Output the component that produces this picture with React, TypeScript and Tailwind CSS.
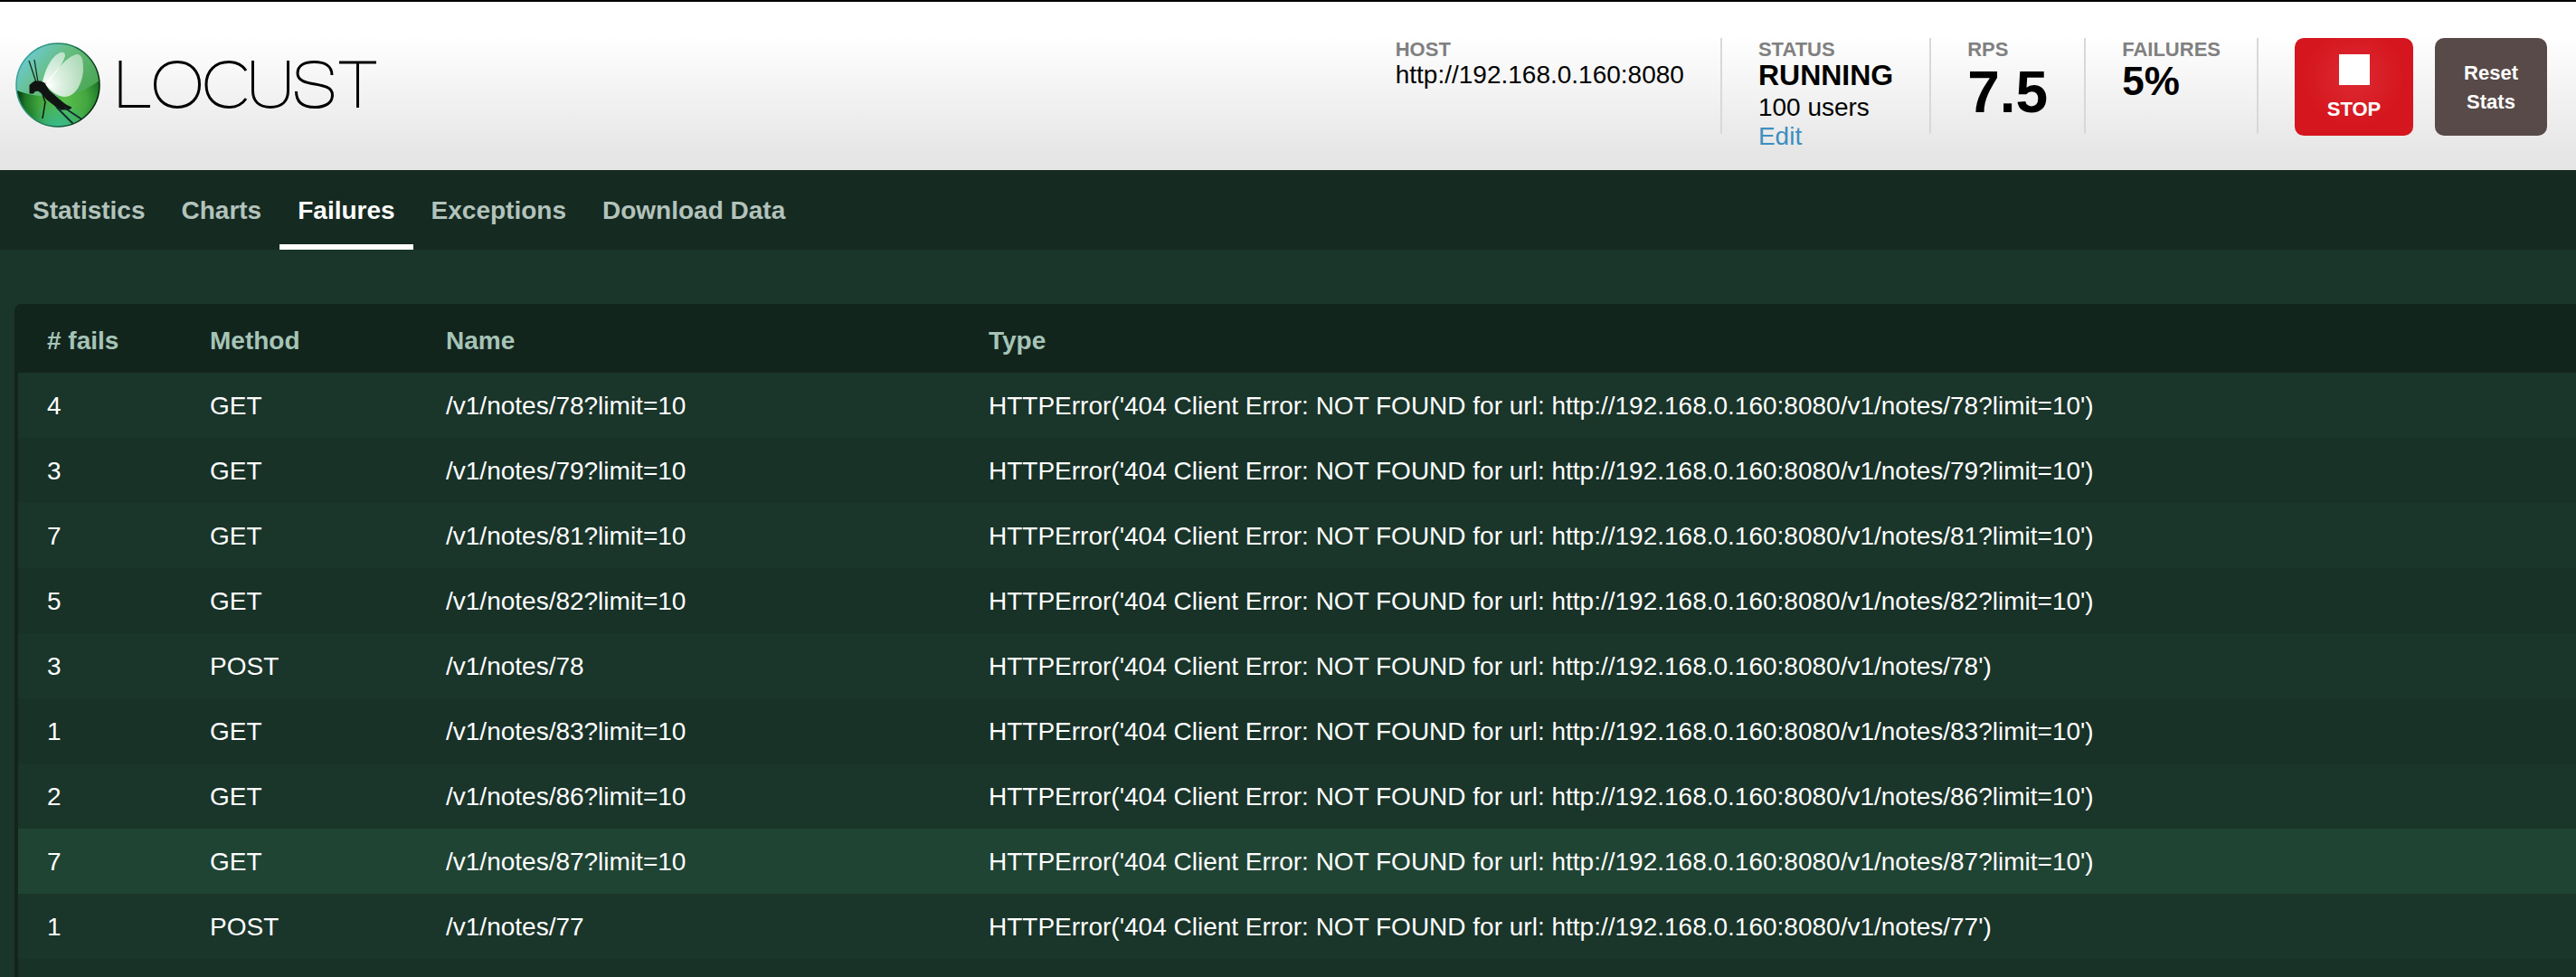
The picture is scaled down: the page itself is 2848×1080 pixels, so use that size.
import type { ReactNode } from "react";

const TABS = ["Statistics", "Charts", "Failures", "Exceptions", "Download Data"];

const HOST = "http://192.168.0.160:8080";

const FAILURES = [
  { count: 4, method: "GET", path: "/v1/notes/78?limit=10" },
  { count: 3, method: "GET", path: "/v1/notes/79?limit=10" },
  { count: 7, method: "GET", path: "/v1/notes/81?limit=10" },
  { count: 5, method: "GET", path: "/v1/notes/82?limit=10" },
  { count: 3, method: "POST", path: "/v1/notes/78" },
  { count: 1, method: "GET", path: "/v1/notes/83?limit=10" },
  { count: 2, method: "GET", path: "/v1/notes/86?limit=10" },
  { count: 7, method: "GET", path: "/v1/notes/87?limit=10", active: true },
  { count: 1, method: "POST", path: "/v1/notes/77" },
];

function Logo() {
  return (
    <svg width="404" height="96" viewBox="16 46 404 96" role="img" aria-label="Locust">
      <defs>
        <radialGradient id="orb" gradientUnits="userSpaceOnUse" cx="70" cy="112" r="52">
          <stop offset="0" stopColor="#5cc04a" />
          <stop offset="0.5" stopColor="#43a740" />
          <stop offset="0.8" stopColor="#1e7a28" />
          <stop offset="1" stopColor="#06350c" />
        </radialGradient>
        <linearGradient id="gloss" gradientUnits="userSpaceOnUse" x1="34" y1="56" x2="96" y2="108">
          <stop offset="0" stopColor="#6cc9cb" />
          <stop offset="0.4" stopColor="#66be80" />
          <stop offset="1" stopColor="#4aa552" />
        </linearGradient>
        <radialGradient id="floor" gradientUnits="userSpaceOnUse" cx="64" cy="146" r="36">
          <stop offset="0" stopColor="#38c0a0" />
          <stop offset="1" stopColor="#38c0a0" stopOpacity="0" />
        </radialGradient>
        <linearGradient id="rim" gradientUnits="userSpaceOnUse" x1="20" y1="70" x2="110" y2="100">
          <stop offset="0" stopColor="#3aa6a4" />
          <stop offset="0.5" stopColor="#1b7d55" />
          <stop offset="1" stopColor="#04240a" />
        </linearGradient>
        <radialGradient id="wing" gradientUnits="userSpaceOnUse" cx="54" cy="94" r="44">
          <stop offset="0" stopColor="#fff" />
          <stop offset="0.3" stopColor="#fff" stopOpacity="0.8" />
          <stop offset="1" stopColor="#fff" stopOpacity="0.5" />
        </radialGradient>
        <clipPath id="orbClip">
          <circle cx="64" cy="94" r="46" />
        </clipPath>
      </defs>
      <g clipPath="url(#orbClip)">
        <circle cx="64" cy="94" r="46" fill="url(#orb)" />
        <circle cx="64" cy="94" r="46" fill="url(#floor)" />
        <path d="M14 42h100v44C98 98 84 106 62 107 42 107 28 104 14 98z" fill="url(#gloss)" />
        <path d="M47 91C50 76 58 61 67 58c5-1 6 3 4 7C67 74 59 84 53 92z" fill="url(#wing)" />
        <path d="M50 93C62 78 74 62 85 60c7 0 7 10 7 18-1 15-9 29-20 29-8 0-16-6-22-14z" fill="url(#wing)" />
        <path d="M32 67 40 91M38 66l4 25" stroke="#16301f" strokeWidth="1.300" fill="none" />
        <path d="M33 103v-9l5-4h7l4 2 5 8 8 7 7 6 4 3 6 3-3 2H67l-6-4-9-7-6-7-4-3-4 1-1 2z" fill="#101513" stroke="#101513" strokeWidth="1" strokeLinejoin="round" />
        <path d="M47 104l3 9-3 18" stroke="#101513" strokeWidth="1.500" fill="none" />
        <path d="M62 118l20 20M71 119l21 14" stroke="#102b32" strokeWidth="1.800" fill="none" />
      </g>
      <circle cx="64" cy="94" r="46" fill="none" stroke="url(#rim)" strokeWidth="1.500" />
      <g fill="none" stroke="#000" strokeWidth="3">
        <path d="M133 67v50.500h33" />
        <path d="M196 68.500c14.500 0 24.500 10 24.500 25s-10 25-24.500 25-24.500-10-24.500-25 10-25 24.500-25z" />
        <path d="M272 78c-4-6-10-9.500-19-9.500-15 0-25 10-25 25s10 25 25 25c9 0 15-3.500 19-9.500" />
        <path d="M279.500 67v33c0 12 7 18.500 19.500 18.500s19.500-6.500 19.500-18.500v-33" />
        <path d="M367 83c0-10-8-14.500-19.500-14.500-11 0-18.500 4-18.500 12.500 0 17 38.500 7 38.500 24 0 9-8 13.500-19.500 13.500-13 0-20.500-5.500-20.500-17.500" />
        <path d="M375 69h41M395.500 69v50" />
      </g>
    </svg>
  );
}

function Stat({ label, children }: { label: string; children: ReactNode }) {
  return (
    <div className="flex h-[106px] flex-col border-r-2 border-[#d8d8d8] px-10 whitespace-nowrap">
      <div className="text-[22px] leading-[25px] font-bold text-[#808080]">{label}</div>
      {children}
    </div>
  );
}

function Header() {
  return (
    <header className="flex items-start justify-between border-t-2 border-black bg-linear-to-b from-white from-20% to-[#e6e6e6] to-90% pr-8 pl-4 text-[28px] leading-8 text-black">
      <a href="#" className="mt-11 mb-[46px]">
        <Logo />
      </a>
      <div className="flex pt-10">
        <Stat label="HOST">
          <div>{HOST}</div>
        </Stat>
        <Stat label="STATUS">
          <div className="pb-1 text-[32px] leading-8 font-bold">RUNNING</div>
          <div>100 users</div>
          <a href="#" className="text-[#3d8fc0]">
            Edit
          </a>
        </Stat>
        <Stat label="RPS">
          <div className="text-[64px] leading-[70px] font-bold">7.5</div>
        </Stat>
        <Stat label="FAILURES">
          <div className="text-[44px] leading-[46px] font-bold">5%</div>
        </Stat>
        <button
          type="button"
          className="ml-10 flex h-[108px] w-[131px] flex-col items-center rounded-[10px] bg-radial-[at_50%_40%] from-[#dd2a32] to-[#d5161e] to-60% pt-[18px] text-[22px] leading-[26px] font-bold text-white"
        >
          <span className="mb-3.5 size-[34px] bg-white" />
          STOP
        </button>
        <button
          type="button"
          className="ml-6 h-[108px] w-[124px] rounded-[10px] bg-[#584a48] px-6 pt-0.5 text-[22px] leading-8 font-bold text-white"
        >
          Reset Stats
        </button>
      </div>
    </header>
  );
}

export default function App() {
  return (
    <div className="h-screen overflow-hidden bg-[#1a352a] font-['Liberation_Sans',Arial,sans-serif] text-[28px] leading-8 text-white">
      <Header />
      <nav className="flex bg-[#152a21] px-4 font-bold">
        {TABS.map((tab) => (
          <button
            key={tab}
            type="button"
            className={
              tab === "Failures"
                ? "h-[88px] border-b-6 border-white px-5 pt-2 text-white"
                : "h-[88px] border-b-6 border-transparent px-5 pt-2 text-[#b3c3bc]"
            }
          >
            {tab}
          </button>
        ))}
      </nav>
      <main className="pt-15 pl-4">
        <table className="w-full table-fixed border-separate border-spacing-0 rounded-tl-lg border-l-4 border-[#12251d] text-left">
          <thead>
            <tr className="h-19 bg-[#12251d] text-[#a6c4b7]">
              <th className="w-[180px] pt-1.5 pl-8">
                # fails
              </th>
              <th className="w-[261px] pt-1.5 pl-8">Method</th>
              <th className="w-[600px] pt-1.5 pl-8">Name</th>
              <th className="pt-1.5 pl-8">Type</th>
            </tr>
          </thead>
          <tbody>
            {FAILURES.map(({ count, method, path, active }) => (
              <tr
                key={method + path}
                className={active ? "h-18 bg-[#204434]" : "h-18 odd:bg-[#1a352a] even:bg-[#183228]"}
              >
                <td className="pt-0.5 pl-8">{count}</td>
                <td className="pt-0.5 pl-8">{method}</td>
                <td className="pt-0.5 pl-8">{path}</td>
                <td className="pt-0.5 pl-8">{`HTTPError('404 Client Error: NOT FOUND for url: ${HOST}${path}')`}</td>
              </tr>
            ))}
            <tr className="h-18 bg-[#183228]">
              <td colSpan={4} />
            </tr>
          </tbody>
        </table>
      </main>
    </div>
  );
}
